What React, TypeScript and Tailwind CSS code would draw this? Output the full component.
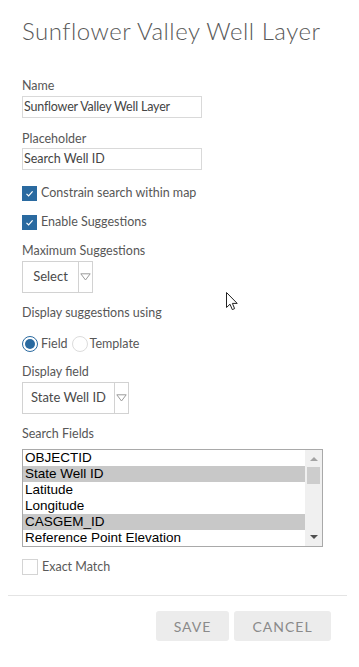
import React from "react";

const font = { fontFamily: "Lato, 'Open Sans', sans-serif" };

function Check({ checked }: { checked: boolean }) {
  return checked ? (
    <div className="w-[15px] h-[15px] bg-[#2a6aa0] flex items-center justify-center shrink-0">
      <svg width="11" height="11" viewBox="0 0 11 11">
        <path d="M2.5 5.8 L4.6 7.9 L8.6 3.4" stroke="#fff" strokeWidth="1.2" fill="none" />
      </svg>
    </div>
  ) : (
    <div className="w-[16px] h-[16px] border border-[#d4d4d4] bg-white shrink-0" />
  );
}

function Arrow() {
  return (
    <svg width="11" height="8" viewBox="0 0 11 8">
      <path d="M0.8 0.8 L10.2 0.8 L5.5 7 Z" stroke="#9a9a9a" strokeWidth="1" fill="none" />
    </svg>
  );
}

function Select({ label, w, lw }: { label: string; w: string; lw: string }) {
  return (
    <div className={`flex h-[32px] border border-[#d2d2d2] bg-white ${w}`}>
      <div className={`flex items-center justify-center text-[13px] text-[#4a4a4a] ${lw}`}>{label}</div>
      <div className="flex-1 border-l border-[#d2d2d2] flex items-center justify-center">
        <Arrow />
      </div>
    </div>
  );
}

export default function App() {
  const rows = [
    { t: "OBJECTID", s: false },
    { t: "State Well ID", s: true },
    { t: "Latitude", s: false },
    { t: "Longitude", s: false },
    { t: "CASGEM_ID", s: true },
    { t: "Reference Point Elevation", s: false },
  ];
  return (
    <div className="relative w-[359px] h-[667px] bg-white overflow-hidden text-[#575757]" style={font}>
      <div className="pl-[22px] flex flex-col">
        <div className="mt-[17px] text-[24px] leading-[28px] font-light text-[#595959] tracking-[0.5px]">
          Sunflower Valley Well Layer
        </div>
        <div className="mt-[33px] text-[12.5px] leading-[16px]">Name</div>
        <div className="mt-[2px] w-[180px] h-[22px] border border-[#d9d9d9] flex items-center pl-[1px] text-[12.5px] text-[#444] tracking-[-0.2px]">
          Sunflower Valley Well Layer
        </div>
        <div className="mt-[13px] text-[12.5px] leading-[16px]">Placeholder</div>
        <div className="mt-[1px] w-[180px] h-[22px] border border-[#d9d9d9] flex items-center pl-[1px] text-[12.5px] text-[#444]">
          Search Well ID
        </div>
        <div className="mt-[15px] flex items-center gap-[4px] h-[16px] text-[12.5px]">
          <Check checked />
          <span>Constrain search within map</span>
        </div>
        <div className="mt-[13px] flex items-center gap-[4px] h-[16px] text-[12.5px]">
          <Check checked />
          <span>Enable Suggestions</span>
        </div>
        <div className="mt-[13px] text-[12.5px] leading-[16px]">Maximum Suggestions</div>
        <div className="mt-[2px]">
          <Select label="Select" w="w-[71px]" lw="w-[55px]" />
        </div>
        <div className="mt-[12px] text-[12.5px] leading-[16px]">Display suggestions using</div>
        <div className="mt-[14px] flex items-center h-[18px] text-[12.5px]">
          <div className="w-[16px] h-[16px] rounded-full border border-[#2a6aa0] flex items-center justify-center">
            <div className="w-[10px] h-[10px] rounded-full bg-[#2a6aa0]" />
          </div>
          <span className="ml-[3px]">Field</span>
          <div className="ml-[4px] w-[16px] h-[16px] rounded-full border border-[#dcdcdc]" />
          <span className="ml-[2px]">Template</span>
        </div>
        <div className="mt-[11px] text-[12.5px] leading-[16px]">Display field</div>
        <div className="mt-[2px]">
          <Select label="State Well ID" w="w-[107px]" lw="w-[91px]" />
        </div>
        <div className="mt-[12px] text-[12.5px] leading-[16px]">Search Fields</div>
        <div
          className="mt-[7px] w-[301px] h-[98px] border border-[#a9a9a9] flex text-[13.5px] text-black"
          style={{ fontFamily: "'Liberation Sans', Arial, sans-serif" }}
        >
          <div className="flex-1 flex flex-col">
            {rows.map((r) => (
              <div key={r.t} className={`h-[16px] leading-[15px] pl-[2px] ${r.s ? "bg-[#c8c8c8]" : ""}`}>
                {r.t}
              </div>
            ))}
          </div>
          <div className="w-[17px] bg-[#f0f0f0] flex flex-col items-center">
            <div className="h-[17px] flex items-center justify-center">
              <svg width="8" height="5" viewBox="0 0 8 5">
                <path d="M0 5 L4 1 L8 5 Z" fill="#a3a3a3" />
              </svg>
            </div>
            <div className="w-[13px] h-[17px] bg-[#cdcdcd]" />
            <div className="flex-1" />
            <div className="h-[17px] flex items-center justify-center">
              <svg width="8" height="5" viewBox="0 0 8 5">
                <path d="M0 0 L8 0 L4 4 Z" fill="#505050" />
              </svg>
            </div>
          </div>
        </div>
        <div className="mt-[12px] flex items-center gap-[4px] h-[16px] text-[12.5px]">
          <Check checked={false} />
          <span className="text-[#5a5a5a]">Exact Match</span>
        </div>
      </div>
      <div className="mt-[20px] mx-[8px] w-[339px] h-px bg-[#e4e4e4]" />
      <div className="mt-[15px] flex justify-end gap-[5px] pr-[28px]">
        <button className="w-[73px] h-[30px] rounded-[3px] bg-[#ececec] text-[#8a8a8a] text-[14px] tracking-[1px]">
          SAVE
        </button>
        <button className="w-[97px] h-[30px] rounded-[3px] bg-[#ececec] text-[#8a8a8a] text-[14px] tracking-[1px]">
          CANCEL
        </button>
      </div>
      <svg className="absolute left-[226px] top-[292px]" width="13" height="20" viewBox="0 0 13 20">
        <path
          d="M0.5 0.5 L0.5 15.5 L4 12.2 L6.3 17.6 L8.6 16.6 L6.4 11.4 L11.2 11.4 Z"
          fill="#fff"
          stroke="#222"
          strokeWidth="1"
          strokeLinejoin="round"
        />
      </svg>
    </div>
  );
}
